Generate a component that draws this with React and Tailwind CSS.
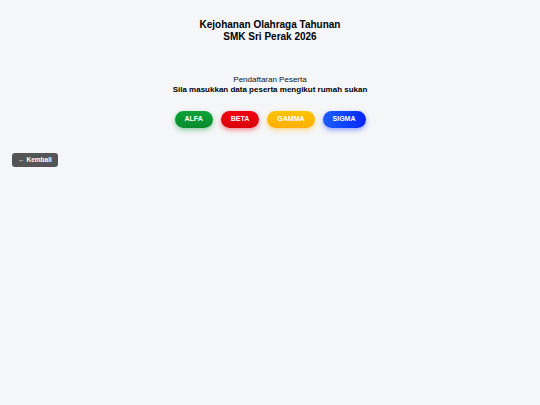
export default function App() {
  const teams = [
    { name: "ALFA", cls: "bg-gradient-to-b from-[#0fa33a] to-[#078a2b] shadow-[0_2px_5px_rgba(0,150,50,0.45)]" },
    { name: "BETA", cls: "bg-gradient-to-b from-[#f00010] to-[#d8000a] shadow-[0_2px_5px_rgba(230,0,20,0.45)]" },
    { name: "GAMMA", cls: "bg-gradient-to-b from-[#ffc400] to-[#ffae00] shadow-[0_2px_5px_rgba(255,180,0,0.45)]" },
    { name: "SIGMA", cls: "bg-gradient-to-r from-[#1e5bff] to-[#0a1fff] shadow-[0_2px_5px_rgba(20,60,255,0.45)]" },
  ];
  return (
    <div className="min-h-[405px] bg-[#f5f6f8] font-['Liberation_Sans',Arial,sans-serif] text-black">
      <div className="pt-[19px] text-center leading-[12px]">
        <div className="text-[10px] font-semibold">Kejohanan Olahraga Tahunan</div>
        <div className="text-[10px] font-bold">SMK Sri Perak 2026</div>
      </div>
      <div className="mt-[32px] text-center text-[8px] leading-[10px]">
        <div className="text-[#111]">Pendaftaran Peserta</div>
        <div className="font-semibold">Sila masukkan data peserta mengikut rumah sukan</div>
      </div>
      <div className="mt-[16px] flex justify-center gap-[8px]">
        {teams.map((t) => (
          <button
            key={t.name}
            className={`h-[17px] rounded-full px-[10px] text-[7px] font-bold text-white ${t.cls}`}
          >
            {t.name}
          </button>
        ))}
      </div>
      <div className="mt-[17px] pl-[12px]">
        <button className="h-[14px] w-[46px] rounded-[3px] bg-[#555555] text-[6.5px] font-bold text-white">
          ← Kembali
        </button>
      </div>
    </div>
  );
}
